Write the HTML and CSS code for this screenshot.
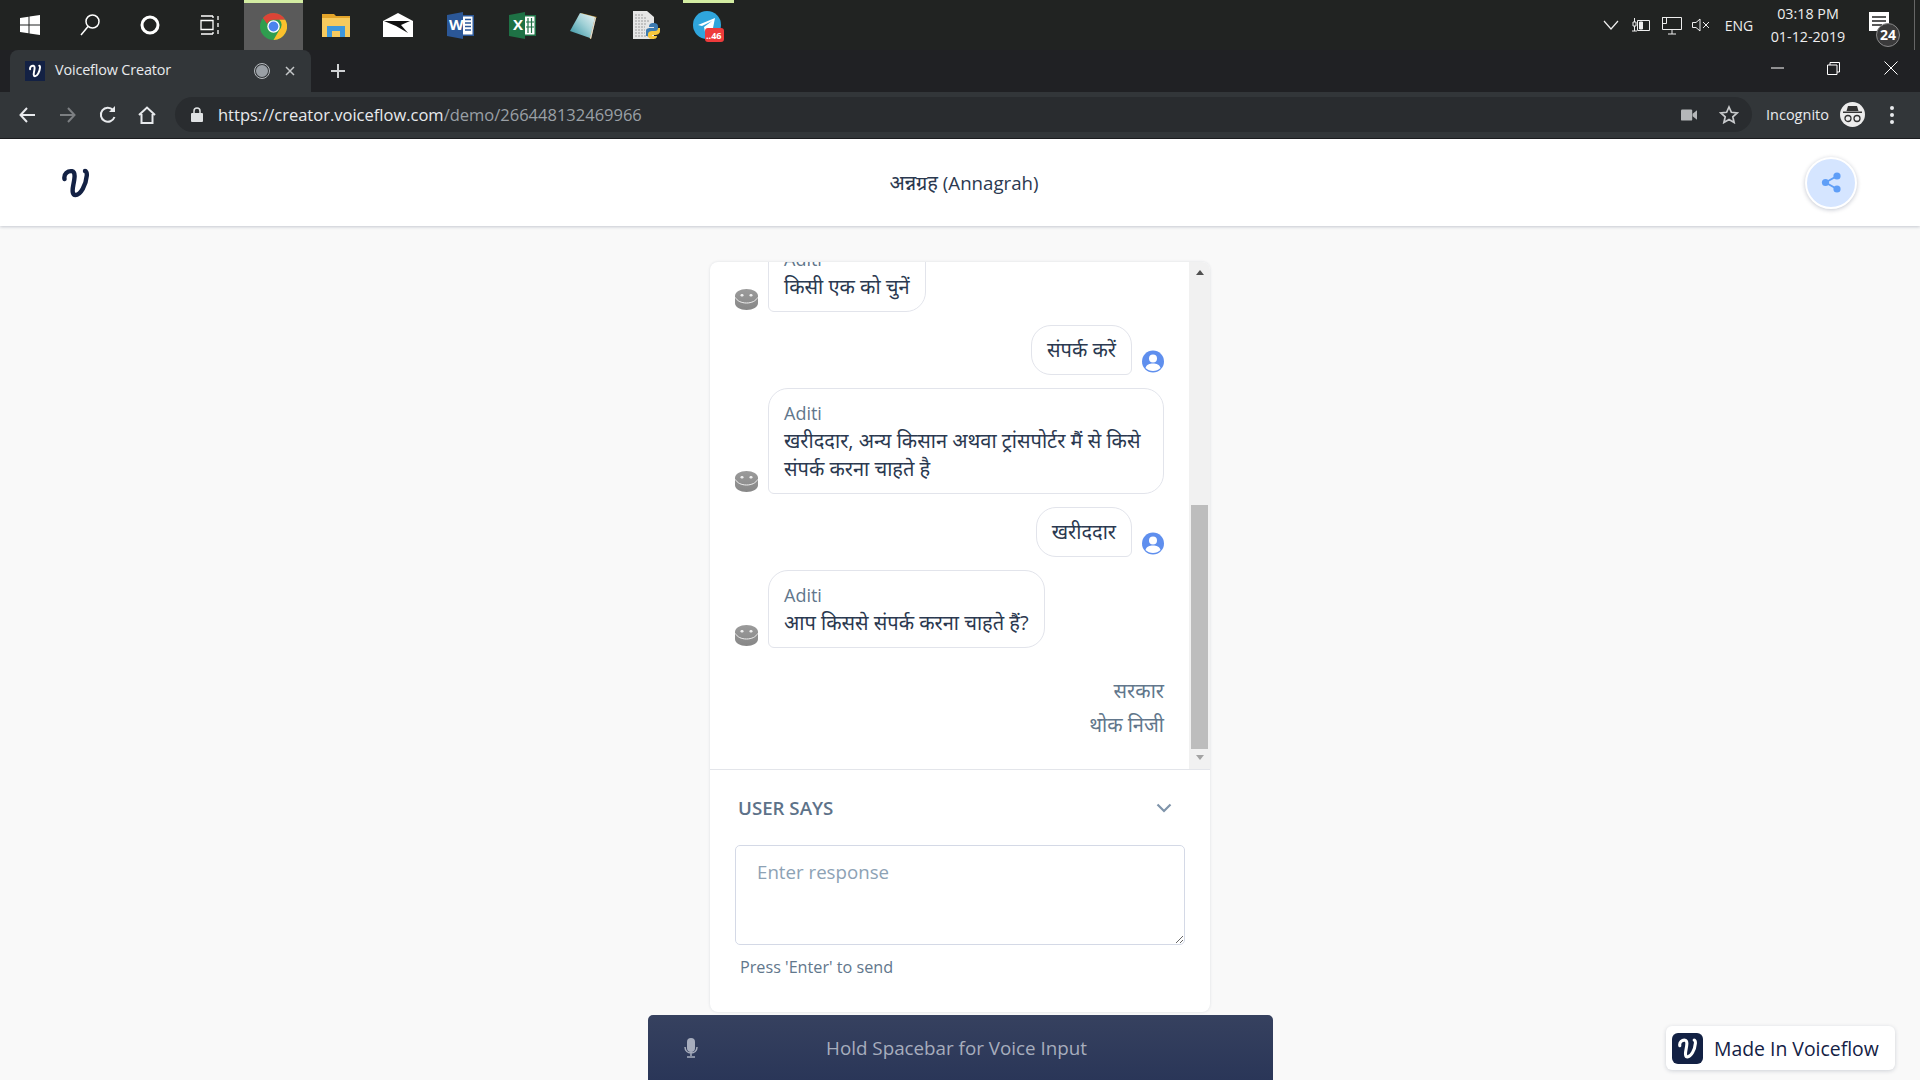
FILE: index.html
```html
<!DOCTYPE html>
<html lang="hi">
<head>
<meta charset="utf-8">
<title>Voiceflow Creator</title>
<link rel="stylesheet" href="styles.css">
</head>
<body>
<svg class="defs" width="0" height="0" aria-hidden="true">
  <defs>
    <linearGradient id="pad" x1="0" y1="1" x2="1" y2="0"><stop offset="0" stop-color="#2f8f9f"/><stop offset=".55" stop-color="#9fd0d6"/><stop offset="1" stop-color="#eef4f5"/></linearGradient>
    <linearGradient id="botg" x1="0" y1="0" x2="0" y2="1"><stop offset="0" stop-color="#9b9b9b"/><stop offset="1" stop-color="#878787"/></linearGradient>
  </defs>
  <symbol id="vf" viewBox="0 0 27 30"><path d="M2.5 11C1.5 6 6 2.5 10 3.2 14 4 12.5 11 11.3 17 10.3 22 10 27 13.5 27 18.5 27 24 17 24.8 7.5 25 4.5 24 3 23 3" fill="none" stroke="currentColor" stroke-width="4.4" stroke-linecap="round"/></symbol>
  <symbol id="bot" viewBox="0 0 23 21"><path d="M0 7C0 3 5 0 11.5 0S23 3 23 7v7c0 4-5 7-11.5 7S0 18 0 14z" fill="url(#botg)"/><path d="M.5 8.500c1.500 3.500 6 5.500 11 5.500s9.500-2 11-5.500" fill="none" stroke="#eee" stroke-width="1"/><rect x="5.500" y="5" width="3" height="2.500" rx="1.200" fill="#eee"/><rect x="14.500" y="5" width="3" height="2.500" rx="1.200" fill="#eee"/></symbol>
  <symbol id="user" viewBox="0 0 22 23"><circle cx="11" cy="11.500" r="11" fill="#5f8fee"/><circle cx="11" cy="8.500" r="4" fill="#fff"/><path d="M3.500 18c1-3.500 4-4.500 7.500-4.500s6.500 1 7.500 4.500c-2 2-4.500 3-7.500 3s-5.500-1-7.500-3z" fill="#fff"/></symbol>
</svg>

<header class="taskbar">
  <div class="slot"><svg width="20" height="20" viewBox="0 0 20 20" fill="#fff"><path d="M0 3l8.500-1.300V9.500H0zM9.500 1.500L20 0v9.500H9.500zM0 10.500h8.500v7.800L0 17zM9.500 10.500H20V20L9.500 18.500z"/></svg></div>
  <div class="slot"><svg width="22" height="24" viewBox="0 0 22 24" fill="none" stroke="#fff" stroke-width="1.500"><circle cx="13.500" cy="8.500" r="6.500"/><path d="M9 13.500L2 22"/></svg></div>
  <div class="slot"><svg width="20" height="20" viewBox="0 0 20 20" fill="none" stroke="#fff" stroke-width="3"><circle cx="10" cy="10" r="8"/></svg></div>
  <div class="slot"><svg width="21" height="20" viewBox="0 0 21 20" fill="none" stroke="#fff" stroke-width="1.300"><path d="M1 1h12M1 19h12M1 5.500h12v9H1zM18 1v4M18 8v4M18 15v4M13 1v2M13 17v2"/></svg></div>
  <div class="tile-chrome"><svg width="27" height="27" viewBox="0 0 26 26"><circle cx="13" cy="13" r="13" fill="#2f9e4f"/><path d="M13 0a13 13 0 0 1 11.300 6.500H13a6.500 6.500 0 0 0-6 4L2.800 4.900A13 13 0 0 1 13 0z" fill="#dc4437"/><path d="M24.300 6.500A13 13 0 0 1 13 26l5.600-9.700a6.500 6.500 0 0 0 0-9.800z" fill="#fbc02d"/><circle cx="13" cy="13" r="6" fill="#fff"/><circle cx="13" cy="13" r="4.700" fill="#4a84ee"/></svg></div>
  <div class="slot slot-wide"><svg width="28" height="23" viewBox="0 0 28 23"><path d="M0 0h12l2 2h14v21H0z" fill="#e3a42a"/><path d="M0 4h28v19H0z" fill="#f6ca5e"/><path d="M5 12h18v11h-5v-6h-8v6H5z" fill="#3d97dc"/></svg></div>
  <div class="slot slot-wide"><svg width="30" height="24" viewBox="0 0 30 24"><path d="M0 8L15 0l15 8v16H0z" fill="#fff"/><path d="M1 8h26l-9 4 7 8-12-7z" fill="#111"/></svg></div>
  <div class="slot slot-wide"><svg width="27" height="27" viewBox="0 0 27 27"><path d="M0 3l16-3v27L0 24z" fill="#2b5797"/><path d="M16 3h11v21H16z" fill="#2b5797"/><path d="M16 4.500h9.500v18H16z" fill="#fff"/><path d="M18 7.500h6M18 11h6M18 14.500h6M18 18h6" stroke="#2b5797" stroke-width="1.500"/><text x="2" y="18" class="ico-letter">W</text></svg></div>
  <div class="slot slot-wide"><svg width="27" height="27" viewBox="0 0 27 27"><path d="M0 3l16-3v27L0 24z" fill="#1e7145"/><path d="M16 3h11v21H16z" fill="#1e7145"/><path d="M16 4.500h9.500v18H16z" fill="#fff"/><path d="M19 6v15M22.500 6v15M17 10h8M17 15h8" stroke="#1e7145" stroke-width="1.200"/><text x="4" y="18" class="ico-letter">X</text></svg></div>
  <div class="slot slot-wide"><svg width="28" height="27" viewBox="0 0 28 27"><path d="M11 1l16 4-1 1-5 21-1 0z" fill="#b58a2e"/><path d="M10 1l15 4-5 21L0 19z" fill="url(#pad)"/><path d="M20 26l5-21 1 1-5 21z" fill="#ddd"/></svg></div>
  <div class="slot slot-wide"><svg width="29" height="28" viewBox="0 0 29 28"><path d="M1 0h14l7 6v22H1z" fill="#e6e6e6"/><path d="M3 4h9M3 7h12M3 10h15M3 13h11M3 16h10M3 19h10M3 22h10M3 25h14" stroke="#9c9c9c" stroke-width="1.100" stroke-dasharray="2 1"/><path d="M14 20c0-3 3-3 5-3h3v-1h-5c0-4 3-4 5-4s4 1 4 3v5c0 2-2 3-4 3h-3c-2 0-3 1-3 2h-2c0-2 0-3 0-5z" fill="#3c7ab0"/><path d="M28 20c0 3-3 4-5 4h-3v1h5c0 3-3 3-5 3s-4-1-4-3v-2c0-2 2-3 4-3h3c2 0 3-1 3-3h2c0 2 0 2 0 3z" fill="#f7c93e"/></svg></div>
  <div class="tile-telegram"><svg width="31" height="31" viewBox="0 0 31 31"><circle cx="14" cy="14" r="14" fill="#2fa5dc"/><path d="M5 14l17-7-3 15-5-4-2 3-1-5 8-6-10 5z" fill="#fff"/><rect x="12" y="17" width="19" height="14" rx="3" fill="#ee3b3b"/><text x="13" y="28" class="ico-badge">..46</text></svg></div>
  <div class="tray">
    <div class="tray-item tw30"><svg width="16" height="10" viewBox="0 0 16 10" fill="none" stroke="#eee" stroke-width="1.200"><path d="M1 1l7 8 7-8"/></svg></div>
    <div class="tray-item tw30"><svg width="20" height="14" viewBox="0 0 20 14" fill="none" stroke="#eee"><path d="M6.500 2.500h12v10h-12z"/><path d="M8.500 4h3v7h-3z" fill="#eee"/><path d="M2 4h3v4H2zM3.500 0v4M3.500 8v5M1 13h5"/></svg></div>
    <div class="tray-item tw31"><svg width="20" height="19" viewBox="0 0 20 19" fill="none" stroke="#eee"><path d="M.5 1.500h19v12H.5zM10 14v4M6 18h8M.5 1.500h4v6h-4z"/></svg></div>
    <div class="tray-item tw29"><svg width="19" height="14" viewBox="0 0 19 14" fill="none" stroke="#eee"><path d="M.5 4.500H4L8 1v12L4 9.500H.5zM11 4l6 6M17 4l-6 6"/></svg></div>
    <div class="tray-item tw46 tray-text">ENG</div>
    <div class="clock"><span>03:18 PM</span><span>01-12-2019</span></div>
    <div class="notif"><svg width="20" height="19" viewBox="0 0 20 19"><path d="M0 0h20v19H0z" fill="#fff"/><path d="M3 5h14M3 9h14M3 13h10" stroke="#222" stroke-width="1.300"/></svg><span class="notif-count">24</span></div>
    <div class="tray-divider"></div>
  </div>
</header>

<div class="tabbar">
  <div class="tab">
    <span class="favicon"><svg width="12" height="14"><use href="#vf"/></svg></span>
    <span class="tab-title">Voiceflow Creator</span>
    <span class="rec"></span>
    <svg class="tab-x" width="10" height="10" viewBox="0 0 10 10" stroke="#c4c7c9" stroke-width="1.500"><path d="M1 1l8 8M9 1L1 9"/></svg>
  </div>
  <svg class="plus" width="14" height="14" viewBox="0 0 14 14" stroke="#d0d2d4" stroke-width="2"><path d="M7 0v14M0 7h14"/></svg>
  <div class="winctl">
    <div class="wc wc-min"><svg width="13" height="2"><path d="M0 1h13" stroke="#fff"/></svg></div>
    <div class="wc wc-res"><svg width="13" height="13" viewBox="0 0 13 13" fill="none" stroke="#fff"><path d="M.5 3h9.500v9.500H.5zM3 3V.5h9.500V10H10"/></svg></div>
    <div class="wc wc-close"><svg width="14" height="14" viewBox="0 0 14 14" stroke="#fff"><path d="M.5.500l13 13M13.500.500l-13 13"/></svg></div>
  </div>
</div>

<div class="toolbar">
  <div class="nav n38"><svg width="16" height="16" viewBox="0 0 16 16" fill="none" stroke="#e8eaed" stroke-width="2"><path d="M16 8H2M8 1L1.500 8 8 15"/></svg></div>
  <div class="nav n44"><svg width="16" height="16" viewBox="0 0 16 16" fill="none" stroke="#7c7f82" stroke-width="2"><path d="M0 8h14M8 1l6.500 7L8 15"/></svg></div>
  <div class="nav n36"><svg width="18" height="18" viewBox="0 0 18 18" fill="none" stroke="#e8eaed" stroke-width="2"><path d="M15.500 11A7 7 0 1 1 14 4"/><path d="M16 0v6h-6" fill="#e8eaed" stroke="none"/></svg></div>
  <div class="nav n42"><svg width="18" height="18" viewBox="0 0 18 18" fill="none" stroke="#e8eaed" stroke-width="2"><path d="M1 9l8-7.500L17 9M3.500 8v9h11V8"/></svg></div>
  <div class="omnibox">
    <svg width="12" height="15" viewBox="0 0 12 15"><path d="M3 6V4a3 3 0 0 1 6 0v2" fill="none" stroke="#e0e2e4" stroke-width="1.500"/><rect y="6" width="12" height="9" rx="1" fill="#e0e2e4"/></svg>
    <div class="url">https://creator.voiceflow.com<span class="url-dim">/demo/266448132469966</span></div>
    <svg class="cam" width="16" height="12" viewBox="0 0 20 14" fill="#b5b7b9"><rect width="14" height="14" rx="1.500"/><path d="M14.500 5.500L20 1v12l-5.500-4.500z"/></svg>
    <svg width="20" height="19" viewBox="0 0 20 19" fill="none" stroke="#c8cacc" stroke-width="1.700"><path d="M10 2l2.400 5.300 5.800.6-4.400 3.900 1.300 5.700-5.100-3-5.100 3 1.300-5.700-4.400-3.900 5.800-.6z"/></svg>
  </div>
  <span class="incog-label">Incognito</span>
  <span class="incog-ava"><svg width="19" height="17" viewBox="0 0 19 17" fill="#333"><path d="M5 0h9l1.500 5H3.500z"/><rect y="5.500" width="19" height="1.500"/><circle cx="5" cy="12.500" r="3" fill="none" stroke="#333" stroke-width="1.300"/><circle cx="14" cy="12.500" r="3" fill="none" stroke="#333" stroke-width="1.300"/></svg></span>
  <span class="dots"><i></i><i></i><i></i></span>
</div>

<div class="app-header">
  <svg class="logo" width="27" height="30"><use href="#vf"/></svg>
  <div class="app-title"><span class="hi">अन्नग्रह</span> (Annagrah)</div>
  <button class="share" type="button"><svg width="21" height="21" viewBox="0 0 21 21" fill="#5f9ef7"><circle cx="16" cy="4" r="3.600"/><circle cx="16" cy="17" r="3.600"/><circle cx="4.500" cy="10.500" r="3.600"/><path d="M4.500 10.500L16 4M4.500 10.500L16 17" stroke="#5f9ef7" stroke-width="2"/></svg></button>
</div>

<main class="stage">
  <section class="card">
    <div class="chat-wrap">
      <div class="chat">
        <div class="row">
          <svg class="bot" width="23" height="21"><use href="#bot"/></svg>
          <div class="bubble bubble-bot"><div class="who">Aditi</div><div class="hi">किसी एक को चुनें</div></div>
        </div>
        <div class="row row-user">
          <div class="bubble bubble-user hi">संपर्क करें</div>
          <svg class="usr" width="22" height="23"><use href="#user"/></svg>
        </div>
        <div class="row">
          <svg class="bot" width="23" height="21"><use href="#bot"/></svg>
          <div class="bubble bubble-bot"><div class="who">Aditi</div><div class="hi">खरीददार, अन्य किसान अथवा ट्रांसपोर्टर मैं से किसे संपर्क करना चाहते है</div></div>
        </div>
        <div class="row row-user">
          <div class="bubble bubble-user hi">खरीददार</div>
          <svg class="usr" width="22" height="23"><use href="#user"/></svg>
        </div>
        <div class="row">
          <svg class="bot" width="23" height="21"><use href="#bot"/></svg>
          <div class="bubble bubble-bot"><div class="who">Aditi</div><div class="hi">आप किससे संपर्क करना चाहते हैं?</div></div>
        </div>
        <div class="options hi">
          <div>सरकार</div>
          <div>थोक निजी</div>
        </div>
      </div>
      <div class="scrollbar">
        <span class="arrow-up"></span>
        <span class="thumb"></span>
        <span class="arrow-down"></span>
      </div>
    </div>
    <div class="says">
      <div class="says-head"><span>USER SAYS</span>
        <svg width="16" height="10" viewBox="0 0 16 10" fill="none" stroke="#7f94aa" stroke-width="2.200"><path d="M1.500 1.500L8 8l6.500-6.500"/></svg></div>
      <textarea class="response" placeholder="Enter response"></textarea>
      <div class="hint">Press 'Enter' to send</div>
    </div>
  </section>
  <div class="voice">
    <svg class="mic" width="14" height="20" viewBox="0 0 14 20"><rect x="3" width="8" height="14" rx="4" fill="#a7adbd"/><path d="M1 9c0 8 12 8 12 0M7 14v4M3 19h8" fill="none" stroke="#a7adbd" stroke-width="1.500"/></svg>
    <span>Hold Spacebar for Voice Input</span>
  </div>
  <div class="made">
    <span class="made-ico"><svg width="19" height="21"><use href="#vf"/></svg></span>
    <span>Made In Voiceflow</span>
  </div>
</main>
</body>
</html>
```
FILE: styles.css
```css
* { box-sizing: border-box; }
html, body { margin: 0; height: 100%; }
body {
  display: flex;
  flex-direction: column;
  height: 100vh;
  overflow: hidden;
  background: #f9f9f9;
  font-family: "Open Sans", "Noto Sans", "Noto Sans Devanagari", "Lohit Devanagari", sans-serif;
  color: #132144;
}
.defs { position: absolute; }
.hi { font-size: 20px; }

/* Taskbar */
.taskbar { flex: 0 0 50px; display: flex; background: #212322; color: #eee; }
.slot { flex: 0 0 60px; display: flex; align-items: center; justify-content: center; }
.slot-wide { flex: 0 0 62px; }
.tile-chrome {
  flex: 0 0 59px; margin: 0 2px 0 4px;
  display: flex; align-items: center; justify-content: center;
  background: #5a5a5a; border-top: 3px solid #d3eca2;
}
.tile-telegram {
  flex: 0 0 51px; margin-left: 6px;
  display: flex; align-items: center; justify-content: center;
  border-top: 3px solid #d3eca2;
}
.ico-letter { font: 700 15px "Open Sans", sans-serif; fill: #fff; }
.ico-badge { font: 700 9px "Open Sans", sans-serif; fill: #fff; }
.tray { margin-left: auto; display: flex; align-items: stretch; }
.tray-item { display: flex; align-items: center; justify-content: center; }
.tw30 { width: 30px; } .tw31 { width: 31px; } .tw29 { width: 29px; } .tw46 { width: 46px; }
.tray-text { font-size: 14px; }
.clock {
  width: 90px; display: flex; flex-direction: column; align-items: center;
  justify-content: center; gap: 4px; font-size: 14.3px; line-height: 19px; padding-left: 2px;
}
.notif { width: 54px; position: relative; display: flex; align-items: center; justify-content: center; padding-bottom: 8px; }
.notif-count {
  position: absolute; left: 24px; top: 23px; width: 24px; height: 24px;
  border-radius: 50%; background: #3b3b3b; border: 1px solid #888;
  font-size: 14px; font-weight: 700; line-height: 22px; text-align: center; color: #fff;
}
.tray-divider { width: 1px; background: #666; margin-left: 8px; margin-right: 5px; }

/* Tab strip */
.tabbar { flex: 0 0 42px; display: flex; align-items: center; background: #202124; padding-left: 10px; }
.tab {
  width: 301px; height: 42px; background: #323639; border-radius: 8px 8px 0 0;
  display: flex; align-items: center; padding: 0 15px;
}
.favicon {
  width: 20px; height: 20px; background: #132144; color: #fff;
  display: flex; align-items: center; justify-content: center;
}
.tab-title { margin-left: 10px; font-size: 14.4px; letter-spacing: -.15px; line-height: 20px; padding-bottom: 2px; color: #e8eaed; flex: 1; }
.rec {
  width: 16px; height: 16px; border-radius: 50%; background: #9aa0a6;
  border: 2px solid #323639; outline: 1.5px solid #b8bcc0; outline-offset: -1px;
}
.tab-x { margin-left: 15px; margin-right: 1px; }
.plus { margin-left: 20px; }
.winctl { margin-left: auto; display: flex; align-self: flex-start; height: 36px; }
.wc { display: flex; align-items: center; justify-content: center; }
.wc-min, .wc-res { width: 56px; }
.wc-close { width: 59px; }

/* Toolbar */
.toolbar { flex: 0 0 47px; display: flex; align-items: center; background: #323639; padding-left: 8px; padding-bottom: 1px; border-bottom: 1px solid #1c1d1f; }
.nav { display: flex; align-items: center; justify-content: center; }
.n38 { width: 38px; } .n44 { width: 44px; } .n36 { width: 36px; } .n42 { width: 42px; }
.omnibox {
  margin-left: 7px; width: 1577px; height: 35px; border-radius: 18px; background: #292c2f;
  display: flex; align-items: center; padding: 0 13px 0 16px;
}
.url { margin-left: 15px; font-size: 16.5px; color: #e8eaed; flex: 1; white-space: nowrap; }
.url-dim { color: #9aa0a6; }
.cam { margin-right: 22px; }
.incog-label { margin-left: 14px; font-size: 14.5px; color: #e8eaed; white-space: nowrap; }
.incog-ava {
  margin-left: 11px; width: 25px; height: 25px; border-radius: 50%; background: #ececec;
  display: flex; align-items: center; justify-content: center;
}
.dots { margin-left: 25px; display: flex; flex-direction: column; gap: 3px; }
.dots i { display: block; width: 4px; height: 4px; border-radius: 50%; background: #e8eaed; }

/* App header */
.app-header {
  flex: 0 0 87px; background: #fff; position: relative; z-index: 1;
  display: grid; grid-template-columns: 1fr auto 1fr; align-items: center;
  padding: 0 63px 0 62px; box-shadow: 0 1px 3px rgba(19,33,68,.22);
}
.logo { color: #132144; }
.app-title { font-size: 18.7px; color: #2b3950; padding-left: 9px; line-height: 28px; }
.share {
  justify-self: end; width: 52px; height: 52px; border-radius: 50%; padding: 0;
  background: #d5e5ff; border: 2px solid #fff; box-shadow: 0 1px 4px rgba(19,33,68,.25);
  display: flex; align-items: center; justify-content: center;
}

/* Stage */
.stage {
  flex: 1; min-height: 0; position: relative;
  display: flex; flex-direction: column; align-items: center; padding-top: 36px;
}
.card {
  flex: 0 0 750px; width: 500px; background: #fff; border-radius: 8px; overflow: hidden;
  box-shadow: 0 0 3px rgba(19,33,68,.12); display: flex; flex-direction: column;
}
.chat-wrap { flex: 0 0 508px; display: flex; min-height: 0; border-bottom: 1px solid #e3e5ea; }
.chat {
  flex: 1; min-width: 0; overflow: hidden; padding: 0 25px;
  display: flex; flex-direction: column; justify-content: flex-end;
  font-size: 18px; line-height: 28px;
}
.row { display: flex; align-items: flex-end; gap: 10px; margin-bottom: 13px; flex: none; }
.row-user { justify-content: flex-end; }
.bot, .usr { flex: none; margin-bottom: 2px; }
.bubble { padding: 10px 15px; border: 1px solid #e2e4eb; border-radius: 20px; background: #fff; color: #2b3950; }
.bubble-bot { border-bottom-left-radius: 6px; }
.bubble-user { border-bottom-right-radius: 6px; }
.who { color: #62778c; font-size: 18px; }
.options { margin-top: 13px; padding-bottom: 27px; text-align: right; color: #62778c; line-height: 34px; flex: none; }
.scrollbar { flex: 0 0 21px; background: #f1f1f1; display: flex; flex-direction: column; align-items: center; }
.arrow-up { margin-top: 8px; border: 4.5px solid transparent; border-top: 0; border-bottom: 5px solid #505050; }
.thumb { width: 17px; height: 244px; margin-top: 230px; background: #bdbdbd; }
.arrow-down { margin-top: 6px; border: 4.5px solid transparent; border-bottom: 0; border-top: 5px solid #a3a3a3; }

.says { flex: 1; padding: 26px 25px 0; }
.says-head {
  display: flex; align-items: center; justify-content: space-between;
  padding: 0 13px 0 3px; font-size: 18.7px; font-weight: 600; line-height: 24px; color: #5d7289;
}
.response {
  display: block; width: 100%; height: 100px; margin-top: 25px; padding: 14px 21px;
  border: 1px solid #d4d9e6; border-radius: 5px; outline: 0;
  font: 18.7px/24px "Open Sans", sans-serif; color: #132144;
}
.response::placeholder { color: #8da2b5; opacity: 1; }
.hint { margin-top: 10px; padding-left: 5px; font-size: 16.2px; line-height: 24px; color: #62778c; }

.voice {
  width: 625px; flex: 0 0 65px; margin-top: 3px; border-radius: 5px 5px 0 0;
  background: linear-gradient(#36415f, #2a3658); color: #a7adbd; font-size: 18.8px;
  display: flex; align-items: center; justify-content: center; position: relative; padding-right: 7px;
}
.mic { position: absolute; left: 36px; top: 23px; }
.made {
  position: absolute; right: 25px; bottom: 10px; width: 229px; height: 44px;
  background: #fff; border-radius: 6px; box-shadow: 0 1px 4px rgba(19,33,68,.18);
  display: flex; align-items: center; gap: 11px; padding-left: 6px; font-size: 19.4px; color: #132144;
}
.made-ico {
  width: 31px; height: 31px; border-radius: 6px; background: #132144; color: #fff;
  display: flex; align-items: center; justify-content: center;
}
```
